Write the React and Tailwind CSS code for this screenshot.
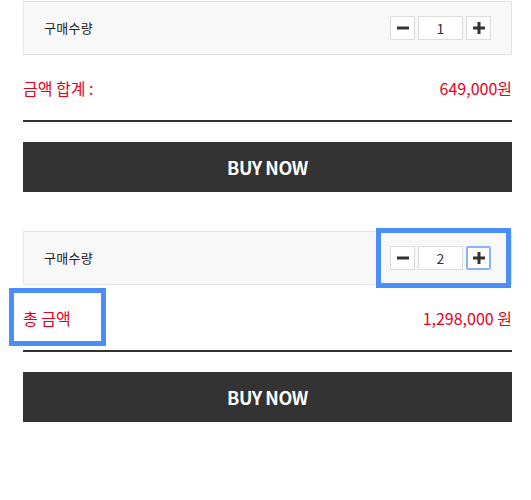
import { useState } from 'react';

const font = { fontFamily: '"Noto Sans CJK KR", "Noto Sans", sans-serif' };

function Minus() {
  return (
    <svg width="12" height="12" viewBox="0 0 12 12">
      <rect x="0" y="4.5" width="12" height="3" fill="#333" />
    </svg>
  );
}

function Plus() {
  return (
    <svg width="12" height="12" viewBox="0 0 12 12">
      <rect x="0" y="4.5" width="12" height="3" fill="#333" />
      <rect x="4.5" y="0" width="3" height="12" fill="#333" />
    </svg>
  );
}

function OrderBox({ initial, label, unitPrice, suffix, focused, className = '' }) {
  const [qty, setQty] = useState(initial);
  const total = (unitPrice * qty).toLocaleString('en-US') + suffix;

  return (
    <div className={className}>
      <div className="h-[54px] border border-[#e5e5e5] bg-[#f8f8f8] flex items-center justify-between pl-[20px] pr-[20px]">
        <span className="text-[13px] text-[#222] tracking-[0.3px]">구매수량</span>
        <div className="flex items-center gap-[3px]">
          <button
            onClick={() => setQty(Math.max(1, qty - 1))}
            className="w-[25px] h-[24px] bg-white border border-[#dcdcdc] flex items-center justify-center"
          >
            <Minus />
          </button>
          <div className="w-[45px] h-[24px] bg-white border border-[#dcdcdc] flex items-center justify-center text-[14px] text-[#333]">
            {qty}
          </div>
          <button
            onClick={() => setQty(qty + 1)}
            className={`w-[25px] h-[24px] bg-white flex items-center justify-center ${
              focused ? 'border-2 border-[#8ab4f8] rounded-[2px]' : 'border border-[#dcdcdc]'
            }`}
          >
            <Plus />
          </button>
        </div>
      </div>

      <div className="h-[65px] flex items-center justify-between text-[16px] text-[#e8001c]">
        <span>{label}</span>
        <span>{total}</span>
      </div>

      <div className="h-[2px] bg-[#333]" />

      <button className="mt-[20px] w-full h-[50px] bg-[#333] text-white text-[18px] font-bold tracking-[-0.4px]">
        BUY NOW
      </button>
    </div>
  );
}

export default function App() {
  return (
    <div className="relative w-[531px] h-[500px] bg-white" style={font}>
      <div className="ml-[23px] w-[489px] pt-px">
        <OrderBox initial={1} label="금액 합계 :" unitPrice={649000} suffix="원" />
        <OrderBox
          className="mt-[39px]"
          initial={2}
          label="총 금액"
          unitPrice={649000}
          suffix=" 원"
          focused
        />
      </div>

      {/* highlight marks */}
      <div className="absolute left-[376px] top-[228px] w-[135px] h-[60px] border-[5px] border-[#4b8ef7]" />
      <div className="absolute left-[9px] top-[288px] w-[97px] h-[58px] border-[5px] border-[#4b8ef7]" />
    </div>
  );
}
